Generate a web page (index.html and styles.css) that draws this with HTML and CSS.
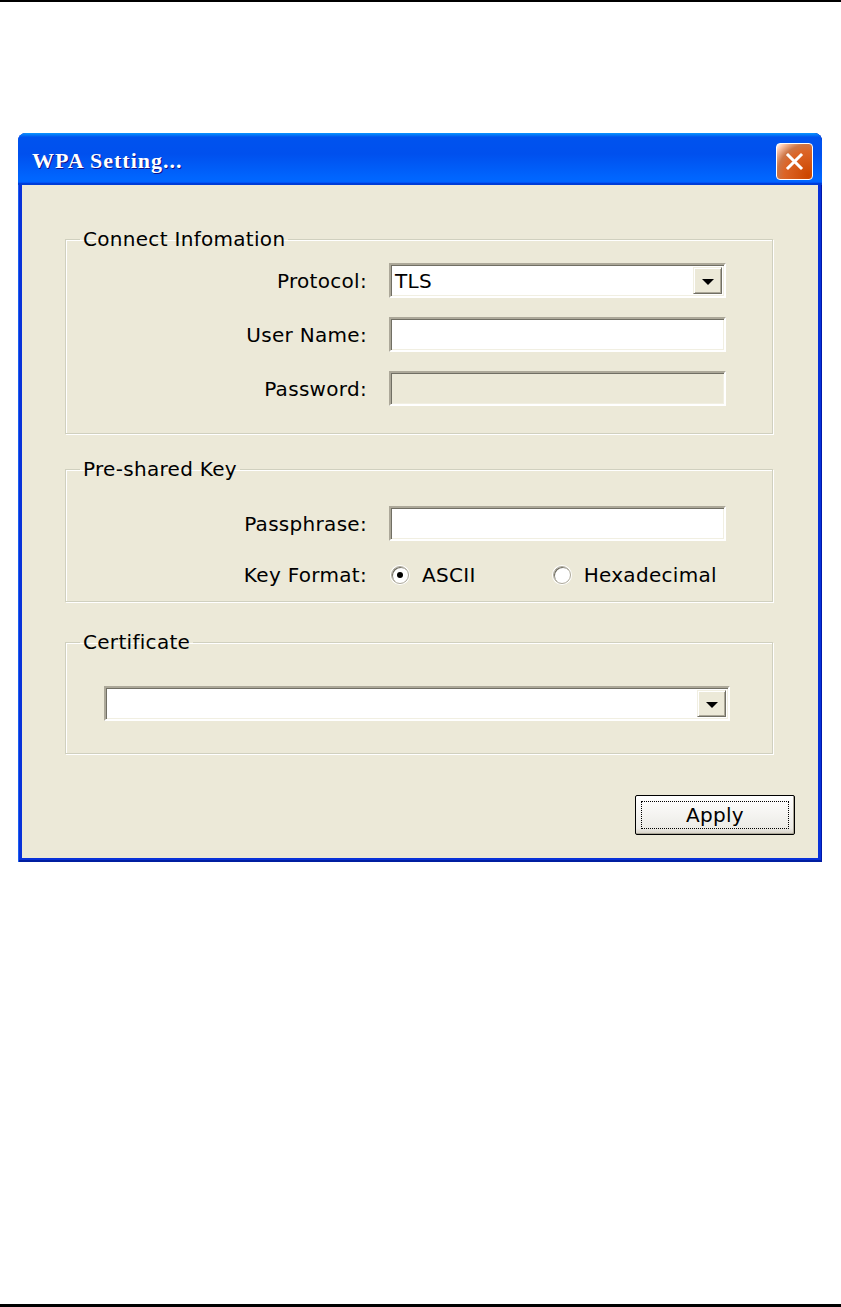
FILE: index.html
```html
<!DOCTYPE html>
<html lang="en">
<head>
    <meta charset="UTF-8">
    <meta name="viewport" content="width=device-width, initial-scale=1.0">
    <title>WPA Setting</title>
    <link rel="stylesheet" href="styles.css">
</head>
<body>
    <div class="page">
        <div class="rule top"></div>

        <div class="window">
            <div class="titlebar">
                <span class="title">WPA Setting...</span>
                <span class="close">
                    <svg width="21" height="21" viewBox="0 0 21 21">
                        <path d="M4 4 L17 17 M17 4 L4 17" stroke="#fff" stroke-width="3" stroke-linecap="square"/>
                    </svg>
                </span>
            </div>

            <div class="dialog">
                <fieldset class="group g-connect">
                    <legend>Connect Infomation</legend>
                    <div class="form">
                        <label>Protocol:</label>
                        <div class="field combo">
                            <span class="value">TLS</span>
                            <span class="drop"><i></i></span>
                        </div>
                        <label>User Name:</label>
                        <div class="field"></div>
                        <label>Password:</label>
                        <div class="field disabled"></div>
                    </div>
                </fieldset>

                <fieldset class="group g-psk">
                    <legend>Pre-shared Key</legend>
                    <div class="form">
                        <label>Passphrase:</label>
                        <div class="field"></div>
                        <label>Key Format:</label>
                        <div class="radios">
                            <span class="radio on"></span>
                            <span class="rlabel">ASCII</span>
                            <span class="radio hex"></span>
                            <span class="rlabel">Hexadecimal</span>
                        </div>
                    </div>
                </fieldset>

                <fieldset class="group g-cert">
                    <legend>Certificate</legend>
                    <div class="field combo wide">
                        <span class="value"></span>
                        <span class="drop"><i></i></span>
                    </div>
                </fieldset>

                <div class="actions">
                    <button class="btn"><span>Apply</span></button>
                </div>
            </div>
        </div>

        <div class="rule bottom"></div>
    </div>
</body>
</html>
```

FILE: styles.css
```css
* {
    margin: 0;
    padding: 0;
    box-sizing: border-box;
}
body {
    background: #fff;
    font-family: "DejaVu Sans", sans-serif;
}
.page {
    height: 1307px;
    display: flex;
    flex-direction: column;
}
.rule {
    background: #000;
    width: 100%;
}
.rule.top {
    height: 2px;
}
.rule.bottom {
    height: 3px;
    margin-top: auto;
}

/* window frame */
.window {
    margin: 131px 0 0 18px;
    width: 804px;
    height: 729px;
    background: #0831d9;
    border-radius: 8px 8px 0 0;
    padding: 0 4px 4px;
    box-shadow: inset 1px 0 0 #1c5ff2, inset -1px 0 0 #0018a8, inset 0 -2px 0 #001ea0;
}
.titlebar {
    height: 52px;
    margin: 0 -4px;
    padding: 0 9px 0 14px;
    border-radius: 8px 8px 0 0;
    background: linear-gradient(180deg, #0997ff, #0053ee 8%, #0050ee 40%, #0066ff 88%, #0066ff 93%, #005bff 95%, #003dd7 96%, #003dd7);
    display: flex;
    align-items: center;
    justify-content: space-between;
}
.title {
    color: #fff;
    font-family: "Liberation Serif", serif;
    font-weight: bold;
    font-size: 22px;
    letter-spacing: 1px;
    text-shadow: 1px 1px 0 #0f1089;
    margin-top: 4px;
}
.close {
    width: 37px;
    height: 37px;
    border: 1px solid #fff;
    border-radius: 4px;
    background: radial-gradient(circle at 90% 90%, #cc4600 0, #dc6527 55%, #cd7546 70%, #ffccb2 90%, #fff 100%);
    display: flex;
    align-items: center;
    justify-content: center;
    margin-top: 4px;
}

/* dialog body */
.dialog {
    height: 673px;
    background: #ece9d8;
    padding: 43px 0 0 43px;
    display: flex;
    flex-direction: column;
}
.group {
    width: 708px;
    border: 1px solid #d0d0bf;
    box-shadow: inset 1px 1px 0 #fff, 1px 1px 0 #fff;
    font-size: 20px;
    letter-spacing: 0.3px;
    color: #000;
}
.group legend {
    margin-left: 14px;
    padding: 0 3px;
    line-height: 22px;
}
.g-connect {
    padding: 13px 0 27px;
}
.g-psk {
    margin-top: 24px;
    padding: 26px 0 12px;
}
.g-cert {
    margin-top: 29px;
    padding: 33px 0 32px;
}

.form {
    display: grid;
    grid-template-columns: 301px 337px;
    column-gap: 22px;
    row-gap: 19px;
    align-items: center;
}
.g-psk .form {
    row-gap: 20px;
}
.form label {
    text-align: right;
}

/* sunken edit box */
.field {
    height: 35px;
    background: #fff;
    border: 2px solid;
    border-color: #aca899 #fff #fff #aca899;
    box-shadow: inset 1px 1px 0 #716f64, inset -1px -1px 0 #f1efe2;
}
.field.disabled {
    background: #ece9d8;
}
.combo {
    display: flex;
    align-items: stretch;
    padding: 2px;
}
.combo .value {
    flex: 1;
    padding-left: 2px;
    line-height: 29px;
}
.combo .drop {
    width: 29px;
    background: #ece9d8;
    border: 1px solid;
    border-color: #f1efe2 #716f64 #716f64 #f1efe2;
    box-shadow: inset 1px 1px 0 #fff, inset -1px -1px 0 #aca899;
    display: flex;
    align-items: center;
    justify-content: center;
}
.combo .drop i {
    width: 0;
    height: 0;
    border-left: 6px solid transparent;
    border-right: 6px solid transparent;
    border-top: 6px solid #000;
    margin-top: 2px;
}
.combo.wide {
    width: 626px;
    margin-left: 38px;
}

/* radio row */
.radios {
    height: 28px;
    display: flex;
    align-items: center;
}
.radio {
    width: 18px;
    height: 18px;
    border-radius: 50%;
    background: #fff;
    border: 1px solid #aca899;
    box-shadow: inset 1px 1px 0 #716f64, 0 0 0 1px #fff;
    margin-left: 2px;
    display: flex;
    align-items: center;
    justify-content: center;
}
.radio.on::after {
    content: "";
    width: 6px;
    height: 6px;
    border-radius: 50%;
    background: #000;
}
.radio.hex {
    margin-left: 77px;
}
.rlabel {
    margin-left: 13px;
}

/* button */
.actions {
    margin-top: 41px;
    padding-right: 23px;
    display: flex;
    justify-content: flex-end;
}
.btn {
    width: 160px;
    height: 40px;
    border: 1px solid #000;
    border-radius: 2px;
    background: linear-gradient(#fff, #ecebe6 85%, #d6d0c5);
    box-shadow: inset -1px -1px 0 #aca899;
    font-family: "DejaVu Sans", sans-serif;
    font-size: 20px;
    letter-spacing: 0.3px;
    color: #000;
    padding: 5px;
    display: flex;
}
.btn span {
    flex: 1;
    border: 1px dotted #000;
    line-height: 26px;
}
```
